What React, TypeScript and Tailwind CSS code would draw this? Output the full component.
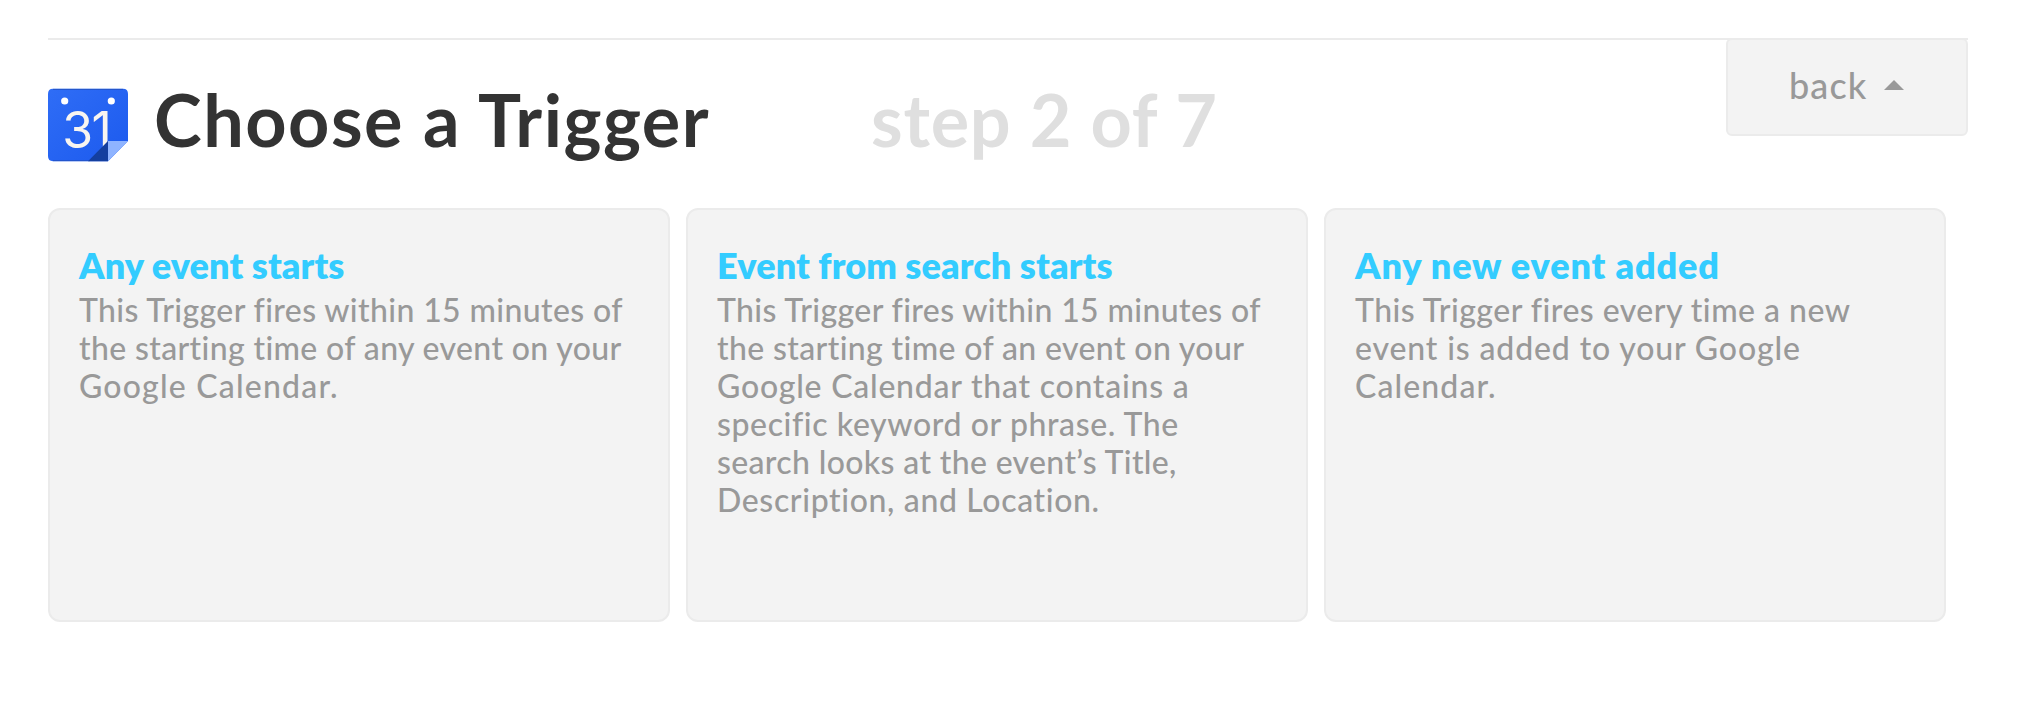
type Line = { text: string; tracking: string };
type Trigger = { title: string; titleClass: string; lines: Line[] };

const triggers: Trigger[] = [
  {
    title: "Any event starts",
    titleClass: "tracking-[0.1px]",
    lines: [
      { text: "This Trigger fires within 15 minutes of", tracking: "tracking-[0.374px]" },
      { text: "the starting time of any event on your", tracking: "tracking-[0.36px]" },
      { text: "Google Calendar.", tracking: "tracking-[1.2px]" },
    ],
  },
  {
    title: "Event from search starts",
    titleClass: "tracking-[0.1px]",
    lines: [
      { text: "This Trigger fires within 15 minutes of", tracking: "tracking-[0.374px]" },
      { text: "the starting time of an event on your", tracking: "tracking-[0.37px]" },
      { text: "Google Calendar that contains a", tracking: "tracking-[0.76px]" },
      { text: "specific keyword or phrase. The", tracking: "tracking-[0.6px]" },
      { text: "search looks at the event’s Title,", tracking: "tracking-[0.347px]" },
      { text: "Description, and Location.", tracking: "tracking-[0.64px]" },
    ],
  },
  {
    title: "Any new event added",
    titleClass: "tracking-[0.86px]",
    lines: [
      { text: "This Trigger fires every time a new", tracking: "tracking-[0.47px]" },
      { text: "event is added to your Google", tracking: "tracking-[0.86px]" },
      { text: "Calendar.", tracking: "tracking-[1.1px]" },
    ],
  },
];

function CalendarIcon() {
  return (
    <svg className="mt-[13px] h-[74px] w-20 shrink-0" viewBox="0 0 80 74" aria-hidden="true">
      <defs>
        <linearGradient id="sheet" x1="0" y1="0" x2="1" y2="1">
          <stop offset="0" stopColor="#2f6df6" />
          <stop offset="1" stopColor="#1c5aee" />
        </linearGradient>
      </defs>
      <path d="M5 .8H75Q80 .8 80 6V53L60 73.2H5Q0 73.2 0 68V6Q0 .8 5 .8Z" fill="url(#sheet)" />
      <path d="M5 1.4H75" stroke="#2454c8" strokeWidth="1" />
      <path d="M5 72.6H42" stroke="#2454c8" strokeWidth="1" />
      <circle cx="16.7" cy="13" r="3.6" fill="#fff" />
      <circle cx="63.3" cy="13" r="3.6" fill="#fff" />
      <text x="14.2 43.5" y="59.5" fill="#f8f5f0" fontFamily="Inter, sans-serif" fontWeight="400" fontSize="50">
        31
      </text>
      <path d="M60 53V73.2H40Z" fill="#143f9f" />
      <path d="M60 53H80L60 73.2Z" fill="#8fb4ff" />
    </svg>
  );
}

function TriggerCard({ title, titleClass, lines }: Trigger) {
  return (
    <section className="h-[414px] w-[622px] rounded-[12px] border-2 border-[#ebebeb] bg-[#f3f3f3] pt-[33px] pl-[29px]">
      <h2 className={`text-4xl leading-[44px] font-extrabold whitespace-nowrap text-[#33ccff] ${titleClass}`}>{title}</h2>
      <p className="mt-1 text-[32px] leading-[38px] font-medium whitespace-nowrap text-[#999]">
        {lines.map((line) => (
          <span key={line.text} className={`block ${line.tracking}`}>
            {line.text}
          </span>
        ))}
      </p>
    </section>
  );
}

export default function App() {
  return (
    <div className="h-[718px] bg-white px-12 pt-[38px] font-[Lato,sans-serif]">
      <div className="w-[1920px]">
        <header className="flex h-[170px] items-start border-t-2 border-[#ebebeb]">
          <div className="flex w-[823px] items-start pt-[35px]">
            <CalendarIcon />
            <h1 className="mt-px ml-[26px] text-[72px] leading-[86px] font-bold tracking-[1.5px] whitespace-nowrap text-[#333]">
              Choose a Trigger
            </h1>
          </div>
          <div className="pt-9 text-[72px] leading-[86px] font-bold tracking-[0.75px] whitespace-nowrap text-[#dfdfdf]">
            step 2 of 7
          </div>
          <button className="-mt-0.5 ml-auto flex h-[98px] w-[242px] items-start rounded-[6px] border-2 border-[#ebebeb] bg-[#f3f3f3] pt-[23px] pl-[61px] text-4xl leading-[44px] font-medium tracking-[1.086px] text-[#999]">
            back
            <svg className="mt-[17px] ml-[17px] h-2.5 w-5" viewBox="0 0 20 10" aria-hidden="true">
              <path d="M10 0L20 10H0Z" fill="#999" />
            </svg>
          </button>
        </header>
        <main className="flex gap-4">
          {triggers.map((trigger) => (
            <TriggerCard key={trigger.title} {...trigger} />
          ))}
        </main>
      </div>
    </div>
  );
}
